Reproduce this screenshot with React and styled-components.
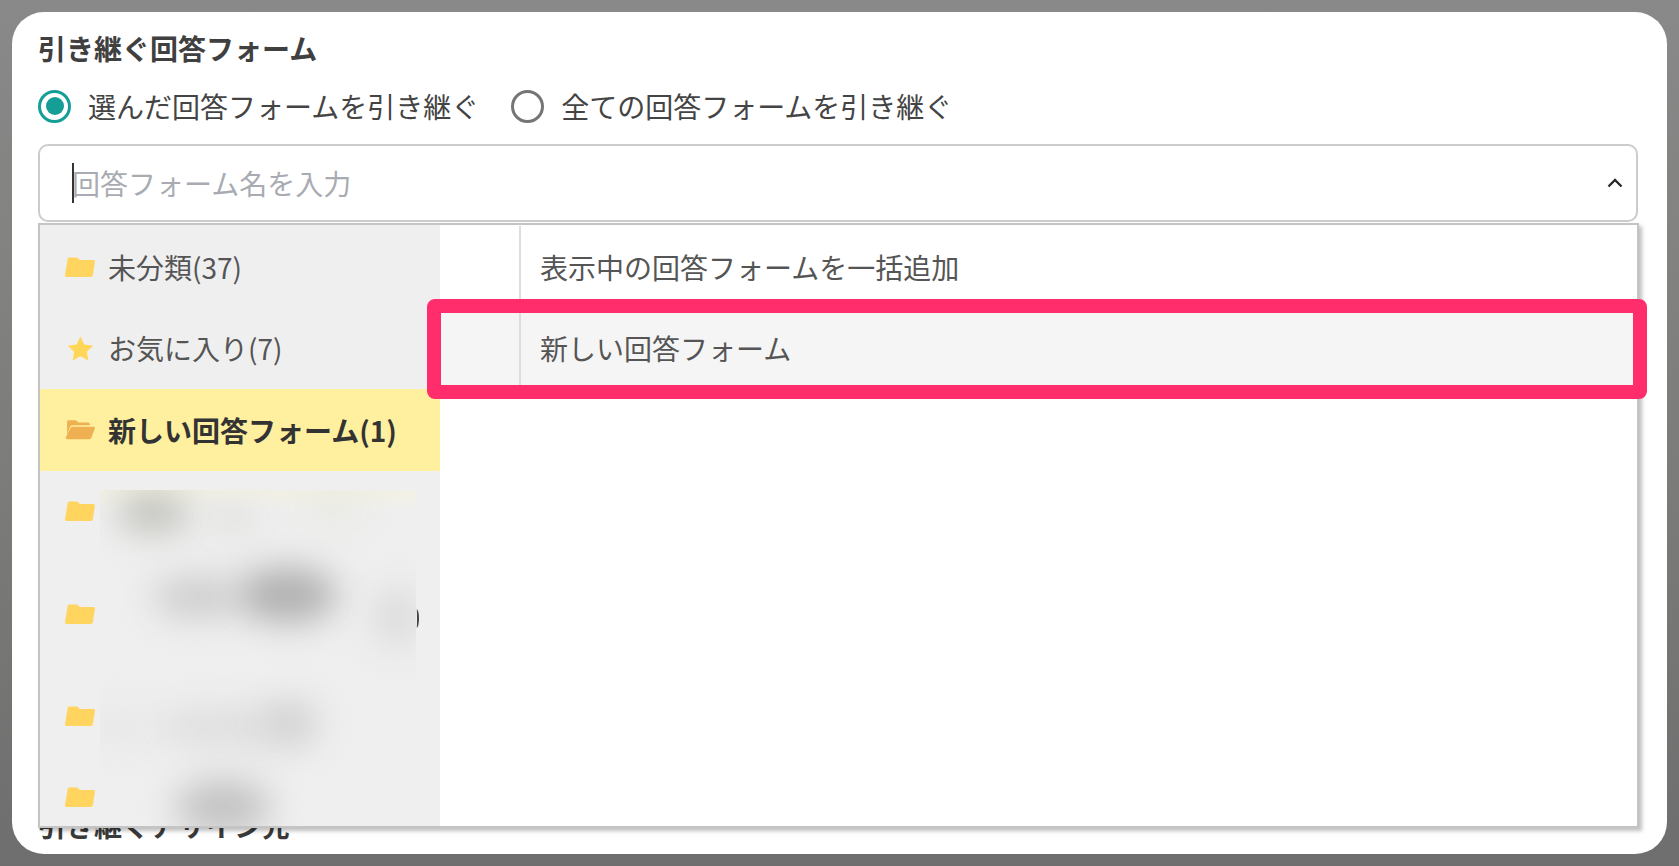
import React from 'react';
import styled, { createGlobalStyle } from 'styled-components';

const FOLDERS = [
  { id: 0, type: 'folder', label: '未分類(37)' },
  { id: 1, type: 'star', label: 'お気に入り(7)' },
  { id: 2, type: 'open', label: '新しい回答フォーム(1)', active: true },
  { id: 3, type: 'folder', label: '' },
  { id: 4, type: 'folder', label: '', tall: true },
  { id: 5, type: 'folder', label: '' },
  { id: 6, type: 'folder', label: '' },
];

const BLOBS = [
  { x: 53, y: 23, w: 72, h: 40, c: '#c0c0ba' },
  { x: 133, y: 28, w: 50, h: 26, c: '#dededc' },
  { x: 233, y: 18, w: 60, h: 20, c: '#e4e4da' },
  { x: 97, y: 107, w: 90, h: 42, c: '#cdcdcd' },
  { x: 187, y: 105, w: 100, h: 56, c: '#b0b0b0' },
  { x: 297, y: 127, w: 44, h: 60, c: '#dadada' },
  { x: 123, y: 237, w: 140, h: 34, c: '#dcdcdc' },
  { x: 190, y: 233, w: 54, h: 44, c: '#d0d0d0' },
  { x: 18, y: 237, w: 40, h: 30, c: '#e2e2e2' },
  { x: 123, y: 317, w: 96, h: 54, c: '#c2c2c2' },
];

const FolderIcon = () => (
  <svg width="30" height="20" viewBox="0 0 30 20">
    <path
      fill="#ffd55f"
      d="M4.5 0.5h7.5l3 2.5h13c1.4 0 2.1 0.8 1.9 2l-2 13c-0.2 1.2-1 2-2.3 2H1.6c-1.2 0-1.8-0.8-1.6-2L2.6 2.2C2.8 1 3.4 0.5 4.5 0.5z"
    />
  </svg>
);

const OpenFolderIcon = () => (
  <svg width="32" height="21" viewBox="0 0 32 21">
    <path fill="#efb052" d="M4 0.5h7.5l3 2.5h10c1.2 0 1.9 0.7 1.9 1.8V6H8.5C6.6 6 5.4 7 4.8 8.6L2.2 16V2.5C2.2 1.2 2.9 0.5 4 0.5z" />
    <path fill="#efb052" d="M9 7.6h21.4c1.2 0 1.8 0.8 1.4 1.9l-3.6 9.6c-0.4 1.1-1.3 1.7-2.4 1.7H2.2c-1.2 0-1.8-0.8-1.4-1.9L5.4 9.6C5.9 8.3 7.2 7.6 9 7.6z" />
  </svg>
);

const StarIcon = () => (
  <svg width="27" height="25" viewBox="0 0 27 25">
    <path
      fill="#ffd658"
      d="M13.5 0.5l3.9 8 8.9 1.2-6.5 6.1 1.6 8.7-7.9-4.2-7.9 4.2 1.6-8.7L0.7 9.7l8.9-1.2z"
    />
  </svg>
);

const ICONS = {
  folder: <FolderIcon />,
  open: <OpenFolderIcon />,
  star: <StarIcon />,
};

const App = () => {
  return (
    <Page>
      <GlobalStyle />
      <Modal>
        <Title>引き継ぐ回答フォーム</Title>
        <RadioRow>
          <RadioCircle $checked />
          <RadioLabel>選んだ回答フォームを引き継ぐ</RadioLabel>
          <RadioCircle $second />
          <RadioLabel>全ての回答フォームを引き継ぐ</RadioLabel>
        </RadioRow>
        <SelectWrap>
          <SearchInput placeholder="回答フォーム名を入力" readOnly />
          <Caret />
          <Chevron viewBox="0 0 16 10" width="16" height="10">
            <path d="M1.5 8.5L8 2l6.5 6.5" fill="none" stroke="#2a2a2a" strokeWidth="2.4" />
          </Chevron>
          <Dropdown>
            <Sidebar>
              {FOLDERS.map((data) => {
                return (
                  <FolderRow key={data.id} $active={data.active} $tall={data.tall}>
                    <IconSlot>{ICONS[data.type]}</IconSlot>
                    {data.label}
                  </FolderRow>
                );
              })}
              <Redacted>
                {BLOBS.map((b, index) => {
                  return (
                    <Blob key={index} $x={b.x} $y={b.y} $w={b.w} $h={b.h} $c={b.c} />
                  );
                })}
              </Redacted>
              <Paren />
            </Sidebar>
            <Options>
              <OptionRow>
                <OptionText>表示中の回答フォームを一括追加</OptionText>
              </OptionRow>
              <OptionRow $hover>
                <OptionText>新しい回答フォーム</OptionText>
              </OptionRow>
            </Options>
            <Highlight />
          </Dropdown>
        </SelectWrap>
        <NextTitle>引き継ぐアサイン先</NextTitle>
      </Modal>
    </Page>
  );
};

export default App;

const GlobalStyle = createGlobalStyle`
  html, body {
    margin: 0;
    padding: 0;
    overflow: hidden;
  }
  * {
    box-sizing: border-box;
  }
`;

const Page = styled.div`
  height: 866px;
  padding: 12px;
  background: linear-gradient(180deg, #898989 0%, #7d7d7b 50%, #6e6e6e 100%);
  font-family: 'Noto Sans CJK JP', 'Noto Sans', sans-serif;
`;

const Modal = styled.div`
  width: 1655px;
  height: 842px;
  padding: 19px 29px 0 26px;
  background: #fff;
  border-radius: 32px;
`;

const Title = styled.div`
  font-size: 28px;
  line-height: 34px;
  font-weight: 700;
  color: #404040;
`;

const RadioRow = styled.div`
  display: flex;
  align-items: center;
  height: 34px;
  margin-top: 24px;
`;

const RadioCircle = styled.span`
  position: relative;
  flex: none;
  width: 33px;
  height: 33px;
  margin-right: 17px;
  margin-left: ${(p) => (p.$second ? '32px' : '0')};
  border: 3px solid ${(p) => (p.$checked ? '#149e96' : '#757575')};
  border-radius: 50%;

  &::after {
    content: '';
    display: ${(p) => (p.$checked ? 'block' : 'none')};
    position: absolute;
    top: 4.5px;
    left: 4.5px;
    width: 18px;
    height: 18px;
    border-radius: 50%;
    background: #149e96;
  }
`;

const RadioLabel = styled.span`
  font-size: 28px;
  line-height: 34px;
  color: #444;
  white-space: nowrap;
`;

const SelectWrap = styled.div`
  position: relative;
  margin-top: 21px;
`;

const SearchInput = styled.input`
  display: block;
  width: 100%;
  height: 78px;
  padding: 0 60px 0 32px;
  border: 2px solid #cccccc;
  border-radius: 10px;
  outline: none;
  font-family: inherit;
  font-size: 28px;
  color: #444;

  &::placeholder {
    color: #a8abb1;
    opacity: 1;
  }
`;

const Caret = styled.span`
  position: absolute;
  top: 19px;
  left: 34px;
  width: 2px;
  height: 40px;
  background: #333;
`;

const Chevron = styled.svg`
  position: absolute;
  top: 34px;
  right: 15px;
`;

const Dropdown = styled.div`
  position: absolute;
  top: 79px;
  left: 0;
  right: -1px;
  height: 605px;
  display: flex;
  background: #fff;
  border: 2px solid #c4c4c4;
  box-shadow: 3px 3px 4px rgba(0, 0, 0, 0.25);
`;

const Sidebar = styled.div`
  position: relative;
  flex: none;
  width: 400px;
  padding-top: 1px;
  background: #efefef;
  overflow: hidden;
`;

const FolderRow = styled.div`
  display: flex;
  align-items: center;
  height: ${(p) => (p.$tall ? '123px' : '81.5px')};
  padding-left: 25px;
  font-size: 28px;
  font-weight: ${(p) => (p.$active ? 700 : 400)};
  color: ${(p) => (p.$active ? '#333' : '#555')};
  background: ${(p) => (p.$active ? '#fff0a0' : 'transparent')};
  white-space: nowrap;
`;

const IconSlot = styled.span`
  display: flex;
  justify-content: center;
  flex: none;
  width: 30px;
  margin-right: 13px;
`;

const Redacted = styled.div`
  position: absolute;
  top: 265px;
  left: 60px;
  width: 316px;
  height: 340px;
  overflow: hidden;
  background: linear-gradient(180deg, #f3f1e4 0, #efefef 22px);
`;

const Blob = styled.span`
  position: absolute;
  top: ${(p) => p.$y}px;
  left: ${(p) => p.$x}px;
  width: ${(p) => p.$w}px;
  height: ${(p) => p.$h}px;
  margin: ${(p) => -p.$h / 2}px 0 0 ${(p) => -p.$w / 2}px;
  border-radius: 50%;
  background: ${(p) => p.$c};
  filter: blur(17px);
`;

const Paren = styled.span`
  position: absolute;
  top: 384px;
  left: 374px;
  width: 5px;
  height: 19px;
  border-right: 2px solid #444;
  border-radius: 50%;
`;

const Options = styled.div`
  flex: 1;
  padding-top: 1px;
`;

const OptionRow = styled.div`
  height: 81.5px;
  padding-left: 79px;
  background: ${(p) => (p.$hover ? '#f5f5f5' : 'transparent')};
`;

const OptionText = styled.div`
  display: flex;
  align-items: center;
  height: 100%;
  padding-left: 19px;
  border-left: 2px solid #dddddd;
  font-size: 28px;
  color: #555;
`;

const Highlight = styled.div`
  position: absolute;
  top: 74px;
  left: 387px;
  width: 1220px;
  height: 100px;
  border: 14px solid #ff2d6b;
  border-radius: 8px;
`;

const NextTitle = styled.div`
  margin-top: 586px;
  font-size: 28px;
  line-height: 34px;
  font-weight: 700;
  color: #3a3a3a;
`;
